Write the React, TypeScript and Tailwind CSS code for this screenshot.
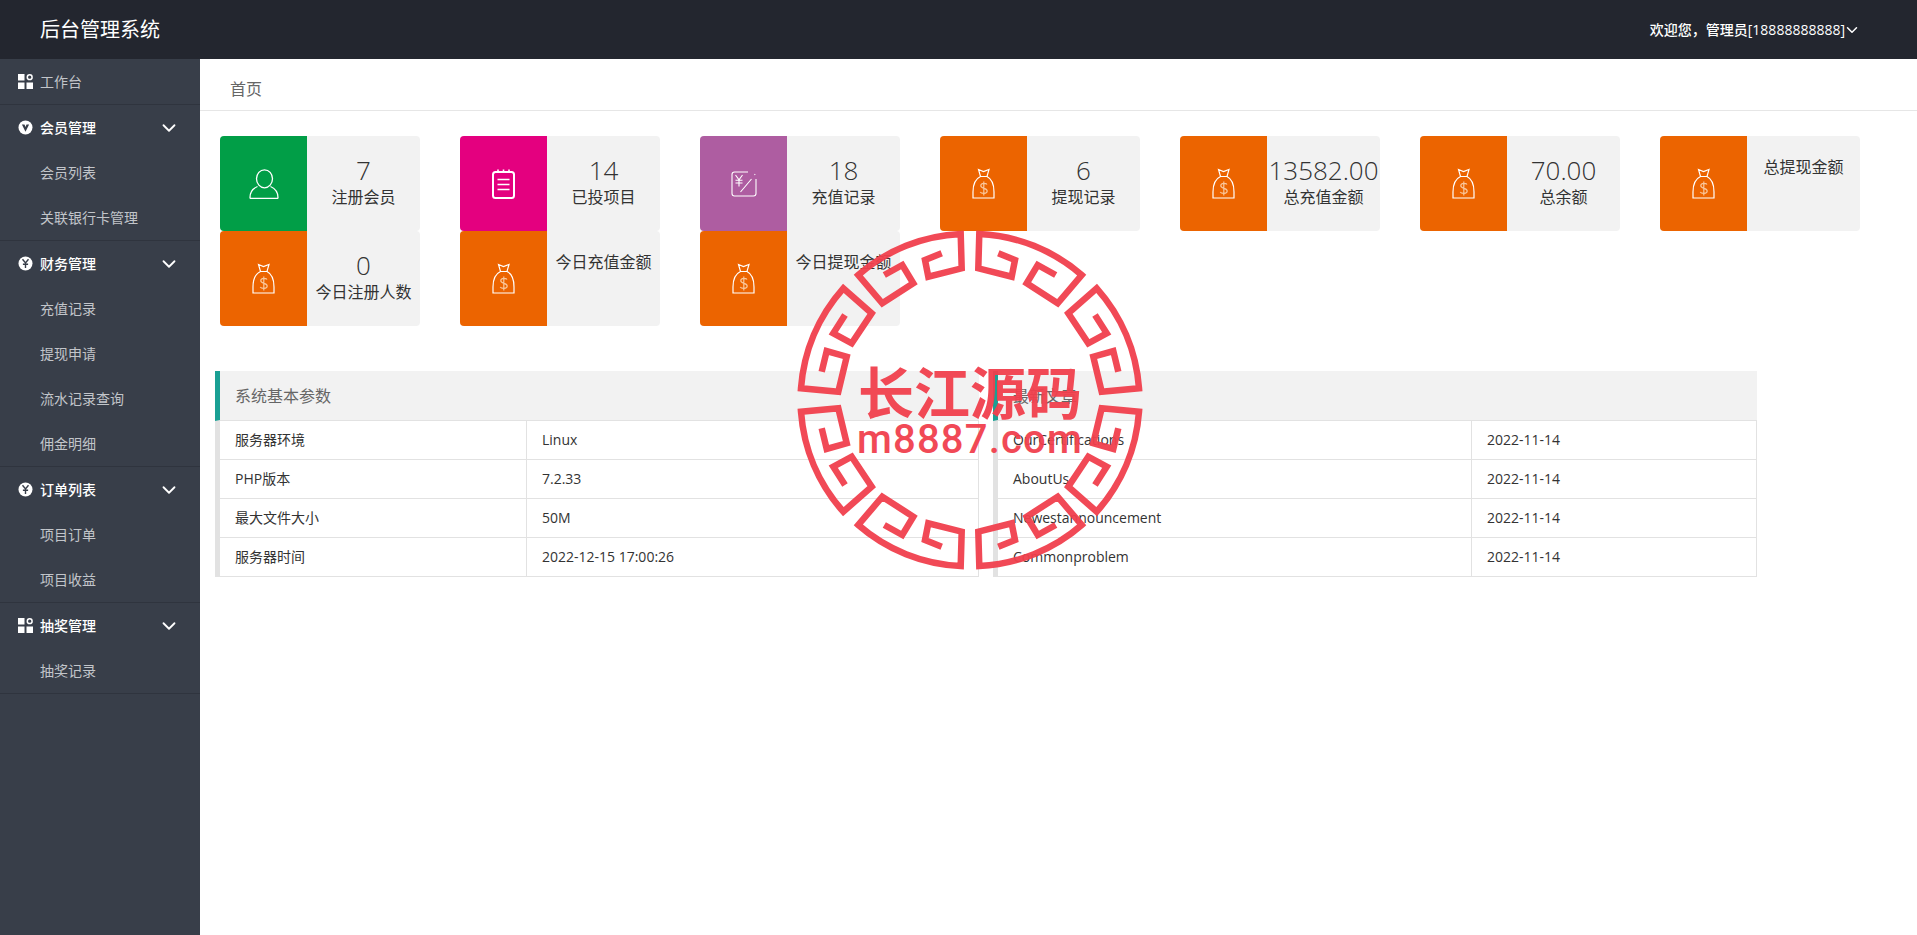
import { ChevronDown } from 'lucide-react'

const menu = [
  { title: '工作台', icon: 'grid', plain: true, items: [] as string[] },
  { title: '会员管理', icon: 'v', items: ['会员列表', '关联银行卡管理'] },
  { title: '财务管理', icon: 'yen', items: ['充值记录', '提现申请', '流水记录查询', '佣金明细'] },
  { title: '订单列表', icon: 'yen', items: ['项目订单', '项目收益'] },
  { title: '抽奖管理', icon: 'grid', items: ['抽奖记录'] },
]

const stats = [
  { value: '7', label: '注册会员', color: 'bg-[#019e47]', icon: 'user' },
  { value: '14', label: '已投项目', color: 'bg-[#e4007f]', icon: 'note' },
  { value: '18', label: '充值记录', color: 'bg-[#ae5da1]', icon: 'yuan' },
  { value: '6', label: '提现记录', color: 'bg-[#ec6400]', icon: 'bag' },
  { value: '13582.00', label: '总充值金额', color: 'bg-[#ec6400]', icon: 'bag' },
  { value: '70.00', label: '总余额', color: 'bg-[#ec6400]', icon: 'bag' },
  { value: '', label: '总提现金额', color: 'bg-[#ec6400]', icon: 'bag' },
  { value: '0', label: '今日注册人数', color: 'bg-[#ec6400]', icon: 'bag' },
  { value: '', label: '今日充值金额', color: 'bg-[#ec6400]', icon: 'bag' },
  { value: '', label: '今日提现金额', color: 'bg-[#ec6400]', icon: 'bag' },
]

const systemRows = [
  ['服务器环境', 'Linux'],
  ['PHP版本', '7.2.33'],
  ['最大文件大小', '50M'],
  ['服务器时间', '2022-12-15 17:00:26'],
]

const articleRows = [
  ['OurCertifications', '2022-11-14'],
  ['AboutUs', '2022-11-14'],
  ['Newestannouncement', '2022-11-14'],
  ['Commonproblem', '2022-11-14'],
]

function MenuIcon({ type }: { type: string }) {
  if (type === 'grid') {
    return (
      <svg width="15" height="15" viewBox="0 0 15 15" fill="white">
        <rect x="0" y="0" width="6.5" height="6.5" />
        <rect x="0" y="8.5" width="6.5" height="6.5" />
        <rect x="8.5" y="8.5" width="6.5" height="6.5" />
        <circle cx="11.7" cy="3.2" r="2.4" fill="none" stroke="white" strokeWidth="1.5" />
      </svg>
    )
  }
  return (
    <svg width="15" height="15" viewBox="-7.5 -7.5 15 15">
      <circle r="7" fill="white" />
      {type === 'v' ? (
        <path d="M-3.6 -3 H-1 L0 -0.4 L1 -3 H3.6 L0 4.2 Z" fill="#383e49" />
      ) : (
        <path d="M-3 -4.2 L0 -0.5 L3 -4.2 M0 -0.5 V4.5 M-2.6 0.8 H2.6" fill="none" stroke="#383e49" strokeWidth="1.4" />
      )}
    </svg>
  )
}

function StatIcon({ type }: { type: string }) {
  if (type === 'user') {
    return (
      <svg width="30" height="30" viewBox="0 0 30 30" fill="none" stroke="white" strokeWidth="1.3">
        <ellipse cx="15.5" cy="9.8" rx="8" ry="9" />
        <path d="M8.5 17.5 C4 19.5 1 22 1 28.5 Q1 29.5 2 29.5 H28 Q29 29.5 29 28.5 C29 22 26 19.5 21.5 17.5" />
      </svg>
    )
  }
  if (type === 'note') {
    return (
      <svg width="23" height="30" viewBox="0 0 23 30" fill="none" stroke="white">
        <rect x="1" y="3" width="21" height="26" rx="2.5" strokeWidth="2" />
        <path d="M6 0.5 V3 M11.5 0.5 V3 M17 0.5 V3" strokeWidth="1.6" />
        <path d="M5.5 10.5 H17.5 M5.5 15.5 H17.5 M5.5 20.5 H17.5" strokeWidth="1.5" />
      </svg>
    )
  }
  if (type === 'yuan') {
    return (
      <svg width="26" height="26" viewBox="0 0 26 26" fill="none" stroke="white" strokeWidth="1.1">
        <path d="M17 1 H3.5 Q1 1 1 3.5 V22.5 Q1 25 3.5 25 H22.5 Q25 25 25 22.5 V8" />
        <path d="M9.5 21 L20.5 8 M23.5 4 L24.2 3.2" />
        <path d="M4.5 4 L8 8.8 L11.5 4 M8 8.8 V15.5 M4.5 9.2 H11.5 M4.5 12 H11.5" />
      </svg>
    )
  }
  return (
    <svg width="23" height="31" viewBox="0 0 23 31" fill="none" stroke="white" strokeWidth="1.2">
      <path d="M6.5 1.5 L11.5 3.5 L17 1.5 L15 8.5 H8.5 Z" />
      <path d="M8.5 8.5 C3 11 1 17 1 24 V30 H22 V24 C22 17 20 11 15 8.5" />
      <path d="M15 16.5 C14 15 8.8 14.8 8.8 17.8 C8.8 21 15.2 19.6 15.2 23 C15.2 26 9.5 25.8 8.2 24 M11.8 13.5 V27.5" stroke="#f9c79c" />
    </svg>
  )
}

function StatCard({ value, label, color, icon }: { value: string; label: string; color: string; icon: string }) {
  return (
    <div className="w-[240px] pr-[40px]">
      <div className="flex h-[95px] overflow-hidden rounded-[4px] bg-[#f2f2f2]">
        <div className={`flex w-[87px] shrink-0 items-center justify-center ${color}`}>
          <StatIcon type={icon} />
        </div>
        <div className="flex-1 pt-[19px] text-center text-[#333]">
          {value && <div className="text-[26px] font-light leading-[30px]">{value}</div>}
          <div className="text-base leading-6">{label}</div>
        </div>
      </div>
    </div>
  )
}

function InfoTable({ title, rows, firstCol }: { title: string; rows: string[][]; firstCol: string }) {
  return (
    <div>
      <div className="h-[50px] border-b border-l-[5px] border-b-[#e2e2e2] border-l-[#1aa094] bg-[#f2f2f2] pl-[15px] text-base leading-[51px] text-[#666]">
        {title}
      </div>
      <div className="border-r border-l-[5px] border-r-[#e2e2e2] border-l-[#e2e2e2]">
        {rows.map((row) => (
          <div key={row[0]} className="flex h-[39px] border-b border-[#e2e2e2] text-sm leading-[38px] text-[#333]">
            <div className={`${firstCol} shrink-0 border-r border-[#e2e2e2] pl-[15px]`}>{row[0]}</div>
            <div className="flex-1 pl-[15px]">{row[1]}</div>
          </div>
        ))}
      </div>
    </div>
  )
}

const keyA = 'M-28.3 -146.7 L-45 -140 L-41.7 -123.3 L-8.3 -131.7 L-9.3 -166 A167 167 0 0 0 -111.7 -125 L-87.7 -96.7 L-56.7 -116.7 L-67.7 -135 L-85.7 -125'
const keyB = 'M-125 -85 L-136.7 -66.7 L-118.3 -56.7 L-98.3 -86.7 L-126.7 -111.7 A169 169 0 0 0 -169 -11.7 L-131.7 -8.3 L-123.3 -43.3 L-143.3 -49 L-148.3 -28.3'

function Watermark() {
  return (
    <div className="pointer-events-none absolute left-[795px] top-[225px] h-[350px] w-[350px] opacity-95">
      <svg width="350" height="350" viewBox="-175 -175 350 350" fill="none" stroke="#f1404d" strokeWidth="6.5" strokeLinejoin="miter">
        {['scale(1,1)', 'scale(-1,1)', 'scale(1,-1)', 'scale(-1,-1)'].map((t) => (
          <g key={t} transform={t}>
            <path d={keyA} />
            <path d={keyB} />
          </g>
        ))}
      </svg>
      <div className="absolute left-0 right-0 top-[135px] text-center text-[56px] font-bold leading-[64px] text-[#f1404d]">长江源码</div>
      <div className="absolute left-0 right-0 top-[192px] text-center font-['Roboto',sans-serif] text-[40px] font-medium leading-[46px] tracking-[1.2px] text-[#f1404d]">m8887.com</div>
    </div>
  )
}

export default function App() {
  return (
    <div className="relative min-h-[935px] bg-white font-['Open_Sans','Noto_Sans_CJK_SC',sans-serif]">
      <header className="flex h-[59px] items-center justify-between bg-[#23262f] pl-[40px] pr-[56px] text-white">
        <div className="text-xl">后台管理系统</div>
        <div className="flex items-center text-sm font-medium">
          <span>欢迎您，管理员[18888888888]</span>
          <ChevronDown size={18} strokeWidth={2} className="-ml-[2px]" />
        </div>
      </header>

      <div className="flex">
        <aside className="h-[876px] w-[200px] shrink-0 bg-[#383e49]">
          {menu.map((group) => (
            <div key={group.title} className="border-b border-[#2f343e]">
              <div className={`flex h-[45px] items-center justify-between pl-[18px] pr-[20px] text-sm ${group.plain ? 'text-[#c2c5ca]' : 'font-medium text-white'}`}>
                <div className="flex items-center gap-[7px]">
                  <MenuIcon type={group.icon} />
                  <span>{group.title}</span>
                </div>
                {!group.plain && <ChevronDown size={22} strokeWidth={2} />}
              </div>
              {group.items.map((item) => (
                <div key={item} className="h-[45px] pl-[40px] text-sm leading-[45px] text-[#c2c5ca]">
                  {item}
                </div>
              ))}
            </div>
          ))}
        </aside>

        <main className="flex-1">
          <div className="h-[52px] border-b border-[#e6e6e6] pl-[30px] text-base leading-[60px] text-[#666]">首页</div>

          <div className="flex flex-wrap pl-[20px] pt-[25px]">
            {stats.map((s) => (
              <StatCard key={s.label} {...s} />
            ))}
          </div>

          <div className="ml-[15px] mt-[45px] grid w-[1542px] grid-cols-2 gap-x-[14px]">
            <InfoTable title="系统基本参数" rows={systemRows} firstCol="w-[307px]" />
            <InfoTable title="最新文章" rows={articleRows} firstCol="w-[474px]" />
          </div>
        </main>
      </div>

      <Watermark />
    </div>
  )
}
